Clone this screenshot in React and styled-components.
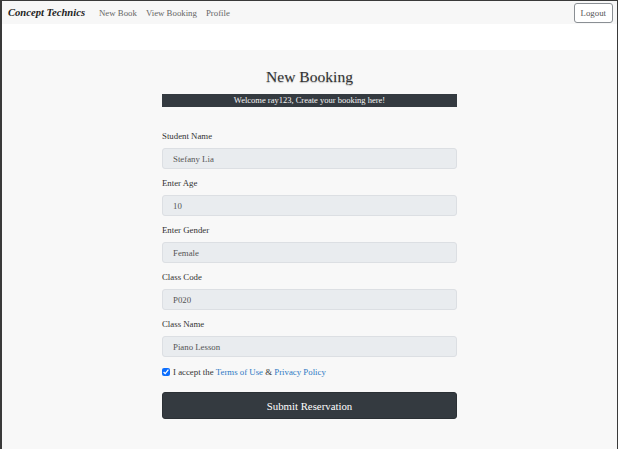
import styled, { createGlobalStyle } from "styled-components";

const GlobalStyle = createGlobalStyle`
  html, body {
    margin: 0;
    padding: 0;
    background: #fff;
  }
  body {
    font-family: "Liberation Serif", "Times New Roman", serif;
  }
  * {
    box-sizing: border-box;
  }
`;

const Frame = styled.div`
  height: 449px;
  border-top: 1px solid #3a3a3a;
  border-left: 2px solid #3a3a3a;
  border-right: 1px solid #3a3a3a;
  background: #f8f8f8;
  display: flex;
  flex-direction: column;
  overflow: hidden;
`;

const Navbar = styled.nav`
  height: 23px;
  background: #f7f7f7;
  display: flex;
  align-items: center;
  padding: 0 4px 0 6px;
`;

const Brand = styled.span`
  font-size: 10.6px;
  font-weight: bold;
  font-style: italic;
  color: #222;
  margin-right: 14px;
`;

const NavLink = styled.a`
  font-size: 8.8px;
  color: #666;
  text-decoration: none;
  margin-right: 9px;
`;

const LogoutButton = styled.button`
  margin-left: auto;
  margin-top: 1px;
  height: 20px;
  padding: 0 6px;
  font-family: inherit;
  font-size: 8.8px;
  color: #555;
  background: #fff;
  border: 1px solid #8a8f94;
  border-radius: 3px;
`;

const Band = styled.div`
  height: 26px;
  background: #fff;
`;

const Main = styled.main`
  flex: 1;
  padding-top: 18px;
`;

const Title = styled.h1`
  margin: 0;
  text-align: center;
  font-size: 15.6px;
  line-height: 18px;
  font-weight: normal;
  color: #333;
  text-shadow: 0 1px 1px rgba(0, 0, 0, 0.25);
`;

const Form = styled.form`
  width: 295px;
  margin: 8px auto 0;
  display: flex;
  flex-direction: column;
`;

const Welcome = styled.div`
  height: 13px;
  background: #343a40;
  color: #f4f4f4;
  font-size: 8.5px;
  line-height: 13px;
  text-align: center;
  margin-bottom: 24px;
`;

const Group = styled.div`
  display: flex;
  flex-direction: column;
  margin-bottom: 9px;
`;

const Label = styled.label`
  font-size: 8.8px;
  line-height: 11px;
  color: #333;
  margin-bottom: 6px;
`;

const Input = styled.input`
  height: 21px;
  padding: 0 10px;
  font-family: inherit;
  font-size: 8.8px;
  color: #555;
  background: #e9ecef;
  border: 1px solid #dcdfe3;
  border-radius: 3px;
  outline: none;
`;

const CheckRow = styled.label`
  display: flex;
  align-items: center;
  height: 11px;
  margin-top: 0.5px;
  font-size: 8.8px;
  color: #333;
  input {
    width: 8px;
    height: 8px;
    margin: 0 3px 0 0;
    accent-color: #0d6efd;
  }
  a {
    color: #2d78c4;
    text-decoration: none;
  }
`;

const SubmitButton = styled.button`
  margin-top: 14.5px;
  height: 27px;
  font-family: inherit;
  font-size: 10.8px;
  color: #fff;
  background: #343a40;
  border: 1px solid #2b3035;
  border-radius: 3px;
`;

const fields = [
  { label: "Student Name", value: "Stefany Lia" },
  { label: "Enter Age", value: "10" },
  { label: "Enter Gender", value: "Female" },
  { label: "Class Code", value: "P020" },
  { label: "Class Name", value: "Piano Lesson" },
];

export default function App() {
  return (
    <>
      <GlobalStyle />
      <Frame>
        <Navbar>
          <Brand>Concept Technics</Brand>
          <NavLink href="#">New Book</NavLink>
          <NavLink href="#">View Booking</NavLink>
          <NavLink href="#">Profile</NavLink>
          <LogoutButton>Logout</LogoutButton>
        </Navbar>
        <Band />
        <Main>
          <Title>New Booking</Title>
          <Form onSubmit={(e) => e.preventDefault()}>
            <Welcome>Welcome ray123, Create your booking here!</Welcome>
            {fields.map((f) => (
              <Group key={f.label}>
                <Label>{f.label}</Label>
                <Input defaultValue={f.value} readOnly />
              </Group>
            ))}
            <CheckRow>
              <input type="checkbox" defaultChecked />
              I accept the&nbsp;<a href="#">Terms of Use</a>&nbsp;&amp;&nbsp;
              <a href="#">Privacy Policy</a>
            </CheckRow>
            <SubmitButton type="submit">Submit Reservation</SubmitButton>
          </Form>
        </Main>
      </Frame>
    </>
  );
}
